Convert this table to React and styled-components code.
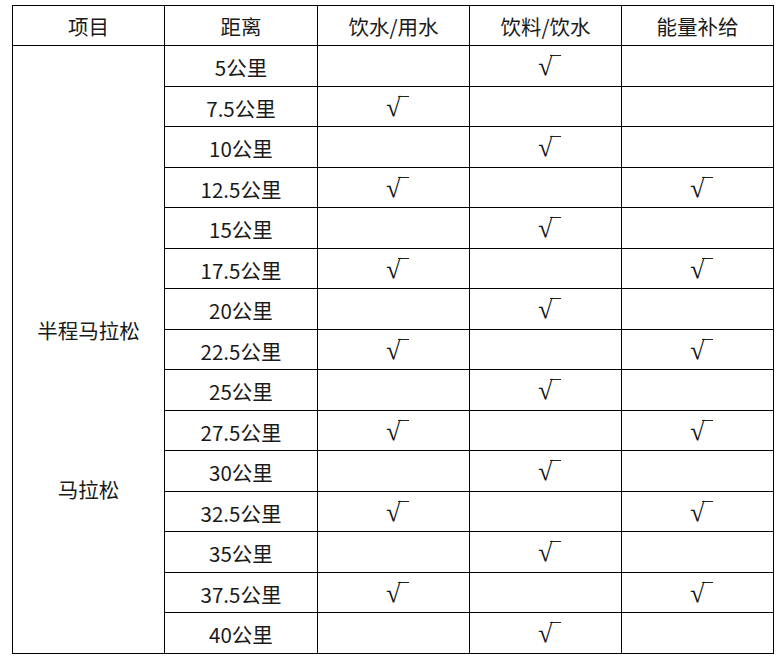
import React from "react";
import styled, { createGlobalStyle } from "styled-components";

const GlobalStyle = createGlobalStyle`
  html, body {
    margin: 0;
    padding: 0;
    background: #ffffff;
  }
  body {
    font-family: "Noto Sans CJK SC", "Noto Sans", sans-serif;
    color: #1a1a1a;
  }
`;

const Page = styled.div`
  padding: 5px 0 0 12px;
`;

const Grid = styled.div`
  display: grid;
  grid-template-columns: 151px 152px 151px 151px 151px;
  grid-template-rows: 39px repeat(15, 39.53px);
  gap: 1px;
  padding: 1px;
  width: 762px;
  box-sizing: border-box;
  background: #000000;
`;

const Cell = styled.div`
  background: #ffffff;
  display: flex;
  align-items: center;
  justify-content: center;
  font-size: 20.5px;
  line-height: 28px;
  padding-top: ${(p) => (p.$head ? "0" : "3px")};
  box-sizing: border-box;
`;

const GroupCell = styled.div`
  grid-column: 1;
  grid-row: 2 / span 15;
  background: #ffffff;
  display: flex;
  flex-direction: column;
  align-items: center;
  padding-top: 270px;
  gap: 131px;
  font-size: 20.5px;
  line-height: 28px;
`;

const Check = styled.span`
  position: relative;
  display: inline-block;
  font-family: "Liberation Serif", "DejaVu Serif", serif;
  font-size: 26px;
  line-height: 26px;
  color: #111;
  margin: 0 12px 0 0;
  transform: translateX(6px);

  &::after {
    content: "";
    position: absolute;
    left: calc(100% - 3px);
    top: 1px;
    width: 11px;
    height: 1px;
    background: #222;
  }
`;

const headers = ["项目", "距离", "饮水/用水", "饮料/饮水", "能量补给"];

const stations = [
  { d: "5公里", water: false, drink: true, energy: false },
  { d: "7.5公里", water: true, drink: false, energy: false },
  { d: "10公里", water: false, drink: true, energy: false },
  { d: "12.5公里", water: true, drink: false, energy: true },
  { d: "15公里", water: false, drink: true, energy: false },
  { d: "17.5公里", water: true, drink: false, energy: true },
  { d: "20公里", water: false, drink: true, energy: false },
  { d: "22.5公里", water: true, drink: false, energy: true },
  { d: "25公里", water: false, drink: true, energy: false },
  { d: "27.5公里", water: true, drink: false, energy: true },
  { d: "30公里", water: false, drink: true, energy: false },
  { d: "32.5公里", water: true, drink: false, energy: true },
  { d: "35公里", water: false, drink: true, energy: false },
  { d: "37.5公里", water: true, drink: false, energy: true },
  { d: "40公里", water: false, drink: true, energy: false },
];

const Mark = ({ on }) => (on ? <Check>√</Check> : null);

export default function App() {
  return (
    <>
      <GlobalStyle />
      <Page>
        <Grid>
          {headers.map((h) => (
            <Cell key={h} $head>
              {h}
            </Cell>
          ))}
          <GroupCell>
            <span>半程马拉松</span>
            <span>马拉松</span>
          </GroupCell>
          {stations.map((s, i) => (
            <React.Fragment key={s.d}>
              <Cell style={{ gridColumn: 2, gridRow: i + 2 }}>{s.d}</Cell>
              <Cell>
                <Mark on={s.water} />
              </Cell>
              <Cell>
                <Mark on={s.drink} />
              </Cell>
              <Cell>
                <Mark on={s.energy} />
              </Cell>
            </React.Fragment>
          ))}
        </Grid>
      </Page>
    </>
  );
}
